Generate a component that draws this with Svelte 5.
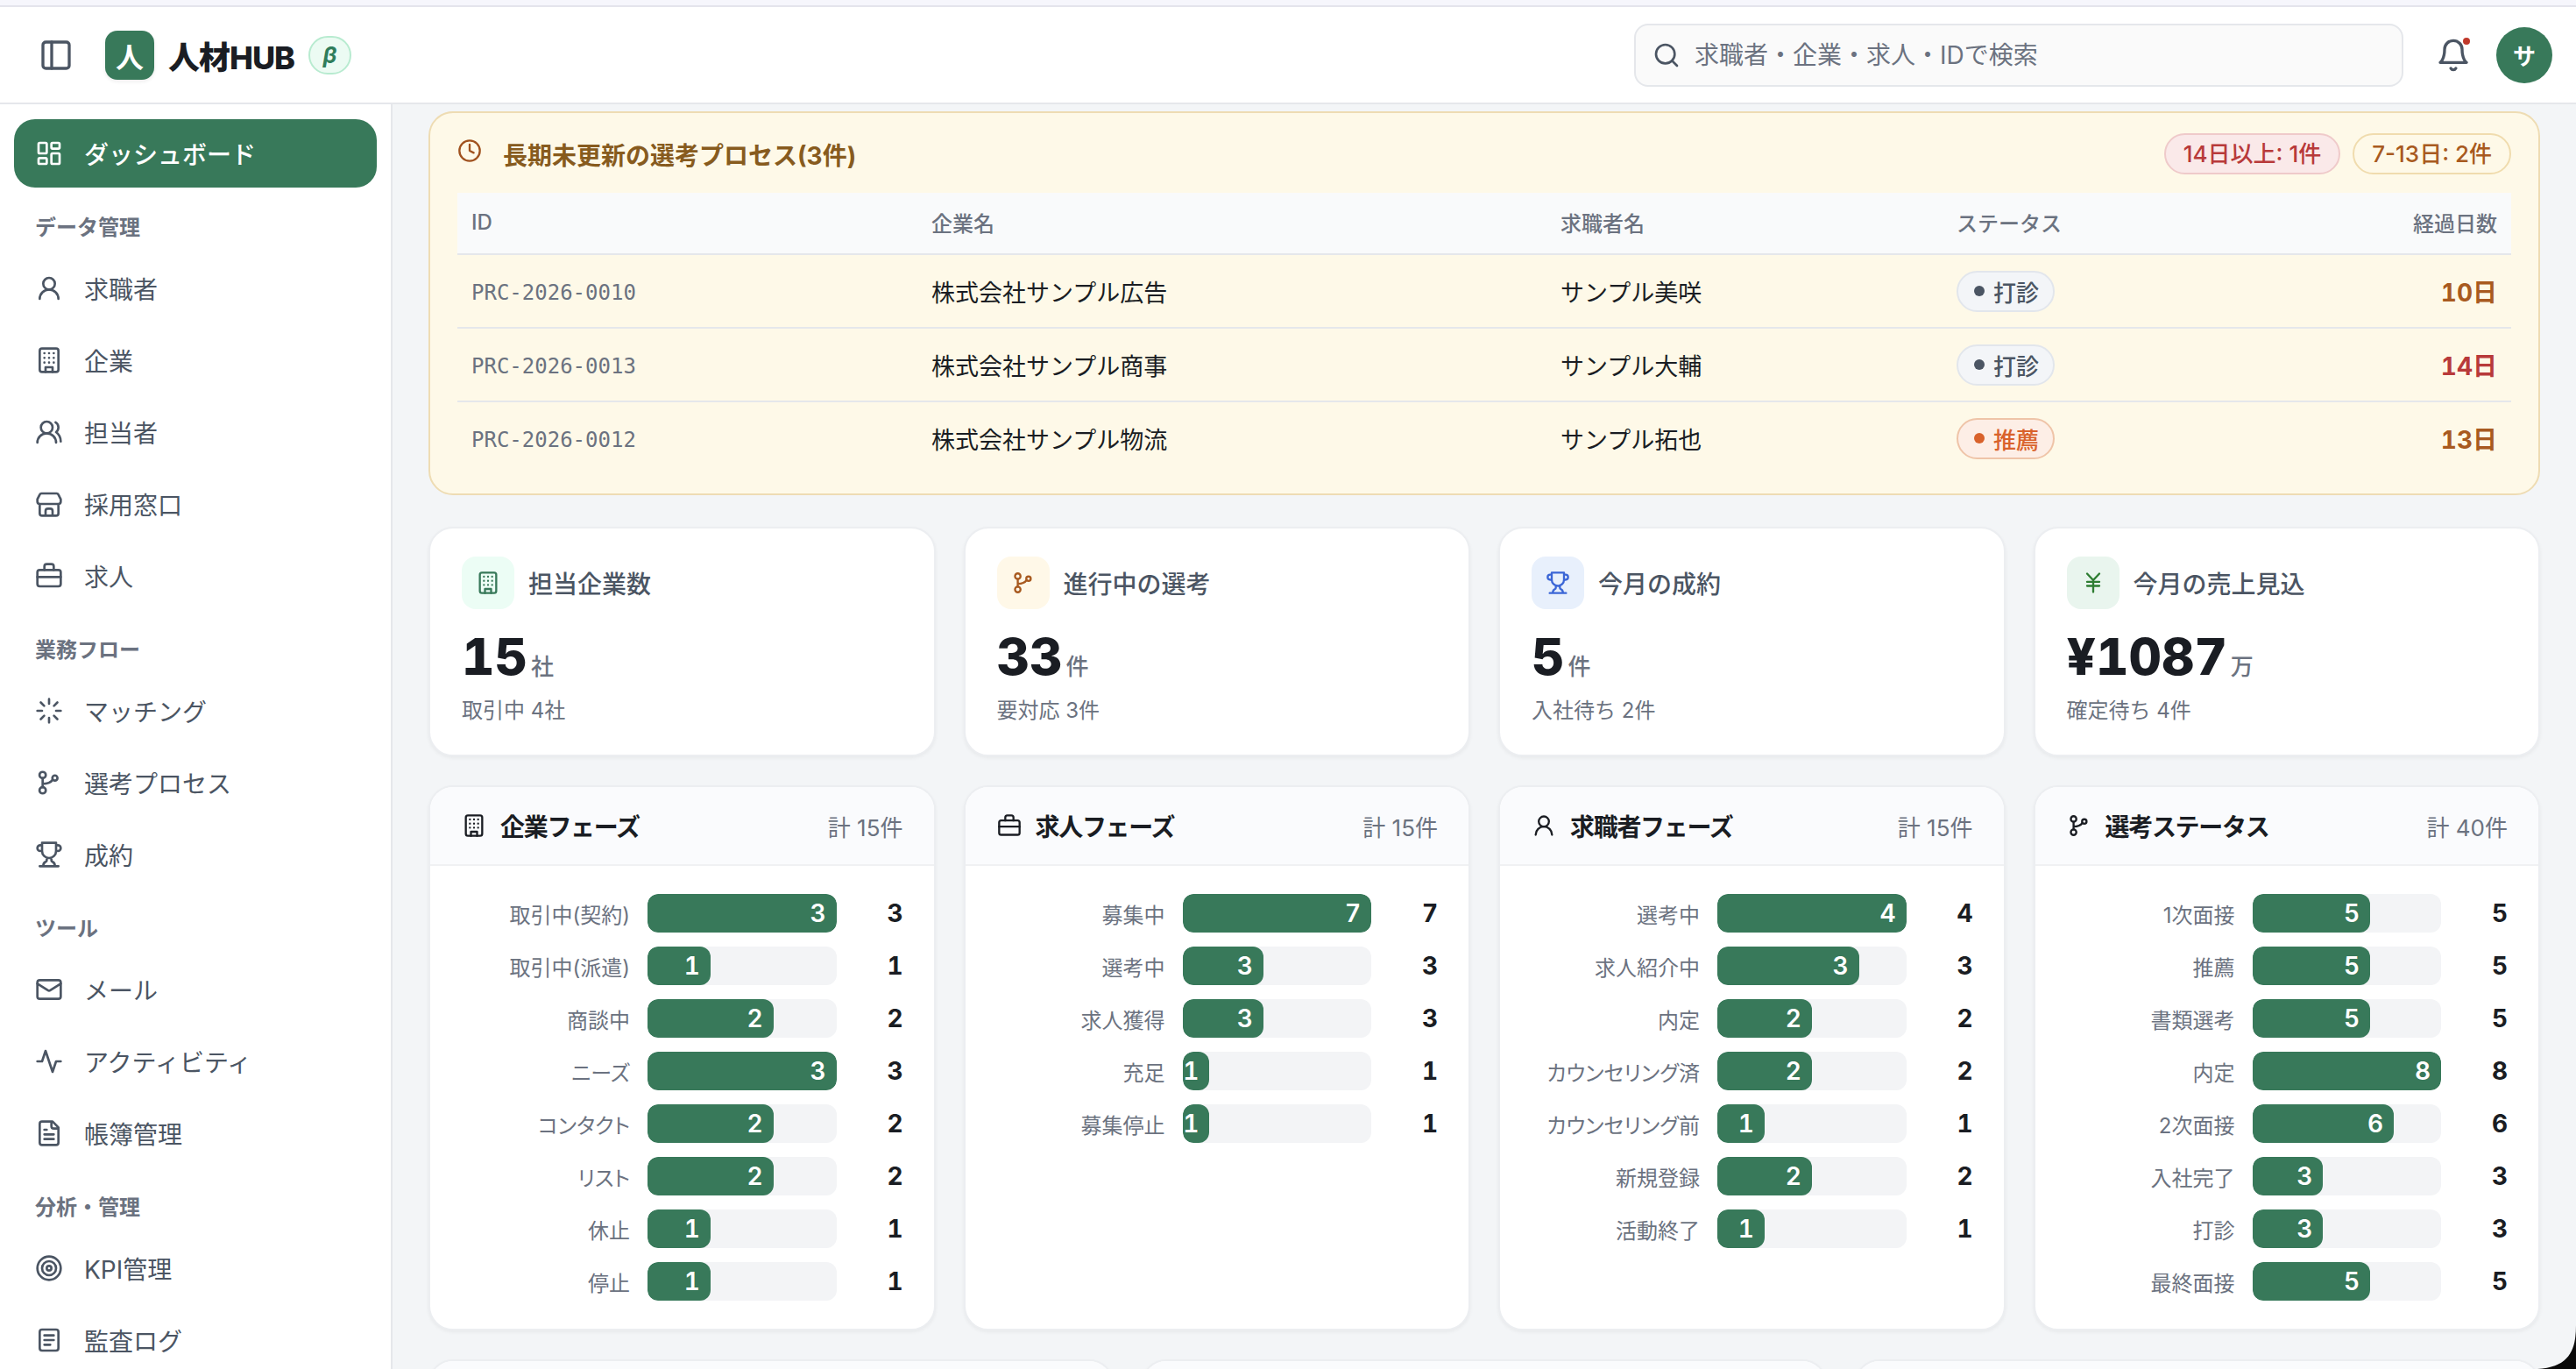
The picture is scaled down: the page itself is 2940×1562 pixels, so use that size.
<script>
  const ICONS = {
    panel: '<rect x="3" y="3" width="18" height="18" rx="2"/><path d="M9 3v18"/>',
    dashboard: '<rect x="3" y="3" width="7" height="9" rx="1"/><rect x="14" y="3" width="7" height="5" rx="1"/><rect x="14" y="12" width="7" height="9" rx="1"/><rect x="3" y="16" width="7" height="5" rx="1"/>',
    user: '<circle cx="12" cy="8" r="5"/><path d="M20 21a8 8 0 0 0-16 0"/>',
    building: '<rect x="4" y="2" width="16" height="20" rx="2"/><path d="M9 22v-4h6v4M8 6h.01M16 6h.01M12 6h.01M12 10h.01M12 14h.01M16 10h.01M16 14h.01M8 10h.01M8 14h.01"/>',
    users: '<path d="M18 21a8 8 0 0 0-16 0"/><circle cx="10" cy="8" r="5"/><path d="M22 20c0-3.37-2-6.5-4-8a5 5 0 0 0-.45-8.3"/>',
    store: '<path d="M5.500 3h13a1.500 1.500 0 0 1 1.400.9L22 8v2a2 2 0 0 1-2 2H4a2 2 0 0 1-2-2V8l2.100-4.100A1.500 1.500 0 0 1 5.500 3ZM4 12v8a2 2 0 0 0 2 2h12a2 2 0 0 0 2-2v-8M15 22v-4a2 2 0 0 0-2-2h-2a2 2 0 0 0-2 2v4"/>',
    briefcase: '<path d="M16 7V4a2 2 0 0 0-2-2h-4a2 2 0 0 0-2 2v3M2 13h20"/><rect x="2" y="7" width="20" height="14" rx="2"/>',
    loader: '<path d="M12 2v4M16.200 7.800l2.900-2.900M18 12h4M16.200 16.200l2.900 2.900M12 18v4M4.900 19.100l2.900-2.900M2 12h4M4.900 4.900l2.900 2.900"/>',
    branch: '<circle cx="6.500" cy="5.500" r="2.700"/><circle cx="6.500" cy="18.500" r="2.700"/><circle cx="17" cy="8" r="2.200"/><path d="M6.500 8.200v7.600M6.500 13c4 0 7-1 8.700-3.600"/>',
    trophy: '<path d="M6 9H4.500a2.500 2.500 0 0 1 0-5H6M18 9h1.500a2.500 2.500 0 0 0 0-5H18M4 22h16M10 14.660V17c0 .55-.47.98-.97 1.210C7.850 18.750 7 20.240 7 22M14 14.660V17c0 .55.47.98.97 1.210C16.150 18.750 17 20.240 17 22M18 2H6v7a6 6 0 0 0 12 0V2Z"/>',
    mail: '<rect x="2" y="4" width="20" height="16" rx="2"/><path d="m22 7-8.970 5.700a1.940 1.940 0 0 1-2.060 0L2 7"/>',
    activity: '<path d="M22 12h-4l-3 9L9 3l-3 9H2"/>',
    file: '<path d="M15 2H6a2 2 0 0 0-2 2v16a2 2 0 0 0 2 2h12a2 2 0 0 0 2-2V7ZM14 2v4a2 2 0 0 0 2 2h4M10 9H8M16 13H8M16 17H8"/>',
    target: '<circle cx="12" cy="12" r="10"/><circle cx="12" cy="12" r="6"/><circle cx="12" cy="12" r="2"/>',
    log: '<rect x="4" y="3" width="16" height="18" rx="2"/><path d="M16 8H8M16 12H8M13 16H8"/>',
    bell: '<path d="M6 8a6 6 0 0 1 12 0c0 7 3 9 3 9H3s3-2 3-9M10.300 21a1.940 1.940 0 0 0 3.400 0"/>',
    search: '<circle cx="11" cy="11" r="8"/><path d="m21 21-4.300-4.300"/>',
    clock: '<circle cx="12" cy="12" r="10"/><path d="M12 6v6l4 2"/>',
    yen: '<path d="M12 9.500V21M12 9.500 6 3M12 9.500 18 3M6 15h12M6 11h12"/>'
  };

  const nav = [
    { items: [{ icon: 'dashboard', label: 'ダッシュボード', active: true }] },
    { title: 'データ管理', items: [
      { icon: 'user', label: '求職者' },
      { icon: 'building', label: '企業' },
      { icon: 'users', label: '担当者' },
      { icon: 'store', label: '採用窓口' },
      { icon: 'briefcase', label: '求人' }
    ] },
    { title: '業務フロー', items: [
      { icon: 'loader', label: 'マッチング' },
      { icon: 'branch', label: '選考プロセス' },
      { icon: 'trophy', label: '成約' }
    ] },
    { title: 'ツール', items: [
      { icon: 'mail', label: 'メール' },
      { icon: 'activity', label: 'アクティビティ' },
      { icon: 'file', label: '帳簿管理' }
    ] },
    { title: '分析・管理', items: [
      { icon: 'target', label: 'KPI管理' },
      { icon: 'log', label: '監査ログ' }
    ] }
  ];

  const rows = [
    { id: 'PRC-2026-0010', company: '株式会社サンプル広告', person: 'サンプル美咲', status: '打診', kind: 'gray', days: '10日', level: 'warn' },
    { id: 'PRC-2026-0013', company: '株式会社サンプル商事', person: 'サンプル大輔', status: '打診', kind: 'gray', days: '14日', level: 'danger' },
    { id: 'PRC-2026-0012', company: '株式会社サンプル物流', person: 'サンプル拓也', status: '推薦', kind: 'orange', days: '13日', level: 'warn' }
  ];

  const stats = [
    { icon: 'building', tone: 'green', label: '担当企業数', value: '15', unit: '社', sub: '取引中 4社' },
    { icon: 'branch', tone: 'amber', label: '進行中の選考', value: '33', unit: '件', sub: '要対応 3件' },
    { icon: 'trophy', tone: 'blue', label: '今月の成約', value: '5', unit: '件', sub: '入社待ち 2件' },
    { icon: 'yen', tone: 'moss', label: '今月の売上見込', value: '¥1087', unit: '万', sub: '確定待ち 4件' }
  ];

  const charts = [
    { icon: 'building', title: '企業フェーズ', total: '計 15件', bars: [['取引中(契約)', 3], ['取引中(派遣)', 1], ['商談中', 2], ['ニーズ', 3], ['コンタクト', 2], ['リスト', 2], ['休止', 1], ['停止', 1]] },
    { icon: 'briefcase', title: '求人フェーズ', total: '計 15件', bars: [['募集中', 7], ['選考中', 3], ['求人獲得', 3], ['充足', 1], ['募集停止', 1]] },
    { icon: 'user', title: '求職者フェーズ', total: '計 15件', bars: [['選考中', 4], ['求人紹介中', 3], ['内定', 2], ['カウンセリング済', 2], ['カウンセリング前', 1], ['新規登録', 2], ['活動終了', 1]] },
    { icon: 'branch', title: '選考ステータス', total: '計 40件', bars: [['1次面接', 5], ['推薦', 5], ['書類選考', 5], ['内定', 8], ['2次面接', 6], ['入社完了', 3], ['打診', 3], ['最終面接', 5]] }
  ];

  const maxOf = (bars) => Math.max(...bars.map((b) => b[1]));
</script>

{#snippet icon(name, size)}
  <svg class="icon" width={size} height={size} viewBox="0 0 24 24" fill="none" stroke="currentColor" stroke-width="2" stroke-linecap="round" stroke-linejoin="round">{@html ICONS[name]}</svg>
{/snippet}

<div class="app">
  <div class="strip"></div>
  <header class="topbar">
    <span class="toggle">{@render icon('panel', 40)}</span>
    <span class="logo">人</span>
    <span class="brand">人材HUB</span>
    <span class="beta">β</span>
    <div class="search">
      {@render icon('search', 32)}
      <input placeholder="求職者・企業・求人・IDで検索" />
    </div>
    <span class="bell">{@render icon('bell', 40)}<i class="dot"></i></span>
    <span class="avatar">サ</span>
  </header>

  <div class="shell">
    <aside class="sidebar">
      {#each nav as group}
        {#if group.title}<div class="group-title">{group.title}</div>{/if}
        {#each group.items as item}
          <div class="nav-item" class:active={item.active}>
            {@render icon(item.icon, 32)}
            <span>{item.label}</span>
          </div>
        {/each}
      {/each}
    </aside>

    <main class="main">
      <section class="alert">
        <div class="alert-head">
          <div class="alert-title">
            <span class="clock">{@render icon('clock', 28)}</span>
            <h2>長期未更新の選考プロセス(3件)</h2>
          </div>
          <div class="alert-badges">
            <span class="badge danger">14日以上: 1件</span>
            <span class="badge warn">7-13日: 2件</span>
          </div>
        </div>
        <table>
          <thead>
            <tr>
              <th class="c-id">ID</th>
              <th class="c-company">企業名</th>
              <th class="c-person">求職者名</th>
              <th class="c-status">ステータス</th>
              <th class="c-days">経過日数</th>
            </tr>
          </thead>
          <tbody>
            {#each rows as row}
              <tr>
                <td class="mono">{row.id}</td>
                <td>{row.company}</td>
                <td>{row.person}</td>
                <td><span class="pill {row.kind}"><i></i>{row.status}</span></td>
                <td class="days {row.level}">{row.days}</td>
              </tr>
            {/each}
          </tbody>
        </table>
      </section>

      <section class="grid four">
        {#each stats as stat}
          <div class="card stat">
            <div class="stat-head">
              <span class="stat-icon {stat.tone}">{@render icon(stat.icon, 28)}</span>
              <span class="stat-label">{stat.label}</span>
            </div>
            <div class="stat-value">{stat.value}<small>{stat.unit}</small></div>
            <div class="stat-sub">{stat.sub}</div>
          </div>
        {/each}
      </section>

      <section class="grid four">
        {#each charts as chart}
          {@const max = maxOf(chart.bars)}
          <div class="card">
            <div class="card-head">
              <h3>{@render icon(chart.icon, 28)}{chart.title}</h3>
              <span class="total">{chart.total}</span>
            </div>
            <div class="bars">
              {#each chart.bars as [label, value]}
                <div class="bar-row">
                  <span class="bar-label">{label}</span>
                  <div class="track">
                    <div class="fill" style="width: {(value / max) * 100}%">{value}</div>
                  </div>
                  <span class="bar-count">{value}</span>
                </div>
              {/each}
            </div>
          </div>
        {/each}
      </section>

      <section class="grid three">
        <div class="card"><div class="card-head"></div></div>
        <div class="card"><div class="card-head"></div></div>
        <div class="card"><div class="card-head"></div></div>
      </section>
    </main>
  </div>

  <svg class="corner" width="60" height="60" viewBox="0 0 60 60"><path d="M60 10C60 36 54 58 16 60L60 60Z" fill="#0a0a0a"/></svg>
</div>

<style>
  :global(body) {
    margin: 0;
    overflow: hidden;
    background: #f3f5f7;
  }

  .app {
    position: relative;
    display: flex;
    flex-direction: column;
    height: 100vh;
    overflow: hidden;
    color: #1a1d23;
    font-family: Inter, "Noto Sans CJK JP", sans-serif;
  }

  .icon {
    display: block;
    flex: none;
  }

  .strip {
    flex: none;
    height: 6px;
    background: #f6f6fc;
    border-bottom: 2px solid #e4e4ec;
  }

  .topbar {
    flex: none;
    display: flex;
    align-items: center;
    height: 109px;
    padding: 0 27px 0 44px;
    background: #fff;
    border-bottom: 2px solid #e5e7eb;
  }

  .toggle {
    color: #4b5563;
    margin-right: 36px;
  }

  .logo {
    display: flex;
    align-items: center;
    justify-content: center;
    width: 56px;
    height: 56px;
    border-radius: 14px;
    background: #38795a;
    color: #fff;
    font-size: 32px;
    font-weight: 700;
    box-shadow: 0 2px 4px rgba(0, 0, 0, 0.08);
  }

  .brand {
    margin-left: 16px;
    font-size: 36px;
    font-weight: 800;
    letter-spacing: -1px;
  }

  .beta {
    display: flex;
    align-items: center;
    justify-content: center;
    box-sizing: border-box;
    width: 49px;
    height: 44px;
    margin-left: 16px;
    border: 2px solid #b8ebd0;
    border-radius: 22px;
    background: #ecfbf3;
    color: #2f7d5b;
    font-size: 26px;
    font-style: italic;
    font-weight: 700;
  }

  .search {
    display: flex;
    align-items: center;
    gap: 16px;
    box-sizing: border-box;
    width: 878px;
    height: 72px;
    margin-left: auto;
    padding-left: 19px;
    border: 2px solid #e5e7eb;
    border-radius: 16px;
    background: #fafafa;
    color: #4b5563;
  }

  .search input {
    flex: 1;
    border: 0;
    outline: 0;
    padding: 0;
    background: none;
    font: inherit;
    font-size: 28px;
    color: #1a1d23;
  }

  .search input::placeholder {
    color: #6b7280;
    opacity: 1;
  }

  .bell {
    position: relative;
    margin-left: 37px;
    color: #4b5563;
  }

  .dot {
    position: absolute;
    top: 0;
    right: 1px;
    width: 8px;
    height: 8px;
    border-radius: 50%;
    background: #c0392b;
  }

  .avatar {
    display: flex;
    align-items: center;
    justify-content: center;
    width: 64px;
    height: 64px;
    margin-left: 29px;
    border-radius: 50%;
    background: #38795a;
    color: #fff;
    font-size: 26px;
    font-weight: 700;
  }

  .shell {
    flex: 1;
    display: flex;
    min-height: 0;
  }

  .sidebar {
    flex: none;
    box-sizing: border-box;
    width: 448px;
    padding: 17px 16px 0;
    background: #fff;
    border-right: 2px solid #e5e7eb;
    overflow: hidden;
  }

  .group-title {
    height: 34px;
    margin: 28px 0 14px;
    padding-left: 24px;
    color: #6b7280;
    font-size: 24px;
    font-weight: 700;
    line-height: 36px;
  }

  .nav-item {
    display: flex;
    align-items: center;
    gap: 24px;
    height: 78px;
    margin-bottom: 4px;
    padding-left: 24px;
    border-radius: 24px;
    color: #4b5563;
    font-size: 28px;
  }

  .nav-item.active {
    background: #38795a;
    color: #fff;
    font-weight: 500;
  }

  .main {
    flex: 1;
    min-width: 0;
    padding: 8px 41px 0;
    overflow: hidden;
  }

  .alert {
    box-sizing: border-box;
    margin-bottom: 36px;
    padding: 23px 31px 22px;
    border: 2px solid #eedcb3;
    border-radius: 28px;
    background: #fef9e8;
  }

  .alert-head {
    display: flex;
    align-items: center;
    justify-content: space-between;
    margin-bottom: 21px;
  }

  .alert-title {
    display: flex;
    align-items: center;
    gap: 24px;
  }

  .clock {
    margin-bottom: 8px;
    color: #a0521f;
  }

  h2 {
    margin: 0;
    color: #875b1e;
    font-size: 28px;
    font-weight: 700;
  }

  .alert-badges {
    display: flex;
    gap: 14px;
  }

  .badge {
    box-sizing: border-box;
    height: 47px;
    padding: 0 20px;
    border: 2px solid;
    border-radius: 24px;
    font-size: 26px;
    font-weight: 500;
    line-height: 43px;
  }

  .badge.danger {
    background: #fae9e9;
    border-color: #efcaca;
    color: #b83a3a;
  }

  .badge.warn {
    background: #fef9e8;
    border-color: #f0dcae;
    color: #a85a20;
  }

  table {
    width: 100%;
    table-layout: fixed;
    border-collapse: collapse;
  }

  th {
    height: 67px;
    padding: 0 16px 2px;
    background: #f9fafb;
    border-bottom: 2px solid #e5e7eb;
    color: #6b7280;
    font-size: 24px;
    font-weight: 500;
    text-align: left;
  }

  .c-id {
    width: 493px;
  }

  .c-company {
    width: 686px;
  }

  .c-person {
    width: 420px;
  }

  .c-status {
    width: 268px;
  }

  th.c-days {
    text-align: right;
  }

  td {
    height: 82px;
    padding: 0 16px;
    border-bottom: 2px solid #e5e7eb;
    font-size: 27px;
  }

  tbody tr:last-child td {
    border-bottom: 0;
  }

  td.mono {
    height: 78px;
    padding-top: 4px;
    color: #6b7280;
    font-family: "DejaVu Sans Mono", monospace;
    font-size: 24px;
  }

  .pill {
    display: inline-flex;
    align-items: center;
    gap: 10px;
    box-sizing: border-box;
    height: 47px;
    padding: 0 16px 0 18px;
    border: 2px solid;
    border-radius: 24px;
    font-size: 26px;
    font-weight: 500;
    vertical-align: middle;
  }

  .pill i {
    width: 12px;
    height: 12px;
    border-radius: 50%;
    background: currentColor;
  }

  .pill.gray {
    background: #f3f5f8;
    border-color: #e2e6ec;
    color: #4b5563;
  }

  .pill.orange {
    background: #fdeee6;
    border-color: #efc4a8;
    color: #d9622b;
  }

  td.days {
    font-size: 28px;
    font-variant-numeric: tabular-nums;
    font-weight: 700;
    text-align: right;
  }

  .days.warn {
    color: #a85a20;
  }

  .days.danger {
    color: #b83a3a;
  }

  .grid {
    display: grid;
    gap: 32px;
    margin-bottom: 33px;
  }

  .four {
    grid-template-columns: repeat(4, minmax(0, 1fr));
  }

  .three {
    grid-template-columns: repeat(3, minmax(0, 1fr));
  }

  .card {
    box-sizing: border-box;
    border: 2px solid #eceef1;
    border-radius: 28px;
    background: #fff;
    box-shadow: 0 2px 4px rgba(0, 0, 0, 0.05);
    overflow: hidden;
  }

  .stat {
    padding: 32px 36px;
  }

  .stat-head {
    display: flex;
    align-items: center;
    gap: 16px;
  }

  .stat-icon {
    display: flex;
    align-items: center;
    justify-content: center;
    width: 60px;
    height: 60px;
    border-radius: 16px;
  }

  .stat-icon.green {
    background: #ecfdf5;
    color: #38795a;
  }

  .stat-icon.amber {
    background: #fff8e8;
    color: #a85a20;
  }

  .stat-icon.blue {
    background: #e8f0fc;
    color: #3b66d6;
  }

  .stat-icon.moss {
    background: #e9f5ee;
    color: #2e7d32;
  }

  .stat-label {
    color: #4b5563;
    font-size: 28px;
    font-weight: 500;
  }

  .stat-value {
    margin-top: 20px;
    font-size: 58px;
    font-variant-numeric: tabular-nums;
    font-weight: 800;
    line-height: 68px;
  }

  .stat-value small {
    margin-left: 4px;
    color: #6b7280;
    font-size: 26px;
    font-weight: 500;
    line-height: 1;
  }

  .stat-sub {
    margin-top: 10px;
    color: #6b7280;
    font-size: 24px;
    line-height: 36px;
  }

  .card-head {
    display: flex;
    align-items: center;
    justify-content: space-between;
    height: 88px;
    padding: 0 35px 0 36px;
    background: #fafbfd;
    border-bottom: 2px solid #f0f1f3;
  }

  h3 {
    display: flex;
    align-items: center;
    gap: 16px;
    margin: 0;
    font-size: 28px;
    font-weight: 700;
    letter-spacing: -1.3px;
  }

  .total {
    color: #6b7280;
    font-size: 26px;
  }

  .bars {
    display: flex;
    flex-direction: column;
    gap: 16px;
    padding: 32px 35px 32px 36px;
  }

  .bar-row {
    display: grid;
    grid-template-columns: 192px 1fr 56px;
    gap: 20px;
    align-items: center;
    height: 44px;
  }

  .bar-label {
    color: #6b7280;
    font-size: 24px;
    font-feature-settings: "palt";
    text-align: right;
    white-space: nowrap;
  }

  .track {
    height: 44px;
    border-radius: 12px;
    background: #f3f4f6;
    overflow: hidden;
  }

  .fill {
    box-sizing: border-box;
    height: 100%;
    padding-right: 12px;
    border-radius: 12px;
    background: #38795a;
    color: #fff;
    font-size: 28px;
    font-variant-numeric: tabular-nums;
    font-weight: 600;
    line-height: 44px;
    text-align: right;
  }

  .bar-count {
    font-size: 28px;
    font-variant-numeric: tabular-nums;
    font-weight: 700;
    text-align: right;
  }

  .corner {
    position: absolute;
    right: 0;
    bottom: 0;
  }
</style>
